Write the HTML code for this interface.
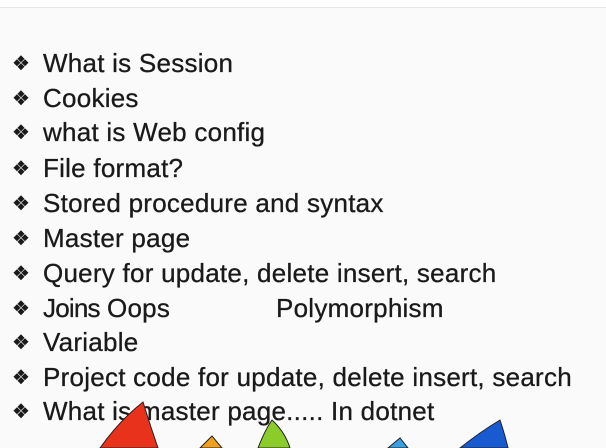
<!DOCTYPE html>
<html><head><meta charset="utf-8"><style>
html,body{margin:0;padding:0;width:606px;height:448px;overflow:hidden;background:#fafafa;font-family:"Liberation Sans",sans-serif;}
.top{position:absolute;left:0;top:0;width:606px;height:7px;background:#fff;border-bottom:1px solid #e6e6e6;}
.l{position:absolute;left:43px;font-size:26px;color:#1a1a1a;white-space:nowrap;line-height:30px;letter-spacing:0.25px;-webkit-text-stroke:0.3px #1a1a1a}
.b{position:absolute;left:-31px;top:1px;font-size:20px}
</style></head><body>
<div class="top"></div>
<div class="l" style="top:48px"><span class="b">❖</span>What is Session</div>
<div class="l" style="top:83px"><span class="b">❖</span>Cookies</div>
<div class="l" style="top:117px"><span class="b">❖</span>what is Web config</div>
<div class="l" style="top:153px"><span class="b">❖</span>File format?</div>
<div class="l" style="top:188px"><span class="b">❖</span>Stored procedure and syntax</div>
<div class="l" style="top:223px"><span class="b">❖</span>Master page</div>
<div class="l" style="top:258px"><span class="b">❖</span>Query for update, delete insert, search</div>
<div class="l" style="top:293px"><span class="b">❖</span><span style="letter-spacing:-0.8px">Joins</span><span style="position:absolute;left:64px">Oops</span><span style="position:absolute;left:233px">Polymorphism</span></div>
<div class="l" style="top:327px"><span class="b">❖</span>Variable</div>
<div class="l" style="top:362px"><span class="b">❖</span>Project code for update, delete insert, search</div>
<div class="l" style="top:396px"><span class="b">❖</span>What is master page..... In dotnet</div>
<svg style="position:absolute;left:0;top:0" width="606" height="448">
<path d="M100 448 Q120 420 143 402 Q150 425 158 448Z" fill="#e8321c" stroke="#222" stroke-width="1"/>
<path d="M200 448 L212 436 L222 448Z" fill="#f0a020" stroke="#222" stroke-width="1"/>
<path d="M258 448 Q265 430 272 420 Q285 432 290 448Z" fill="#8ccc2a" stroke="#222" stroke-width="1"/>
<path d="M388 448 L400 438 L408 448Z" fill="#3aa0e0" stroke="#222" stroke-width="1"/>
<path d="M460 448 Q480 432 500 420 Q505 435 508 448Z" fill="#1a5ad0" stroke="#222" stroke-width="1"/>
</svg>
</body></html>
